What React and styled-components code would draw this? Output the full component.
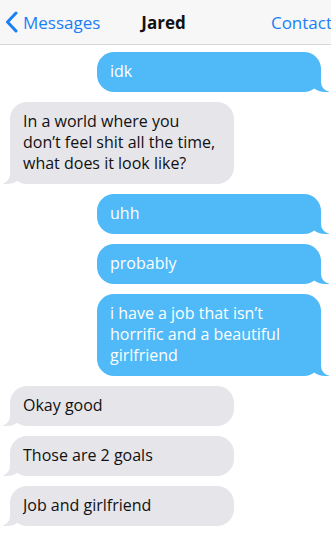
import React from "react";
import styled, { createGlobalStyle } from "styled-components";

const Global = createGlobalStyle`
  html, body { margin: 0; padding: 0; background: #ffffff; }
  body { font-family: "Open Sans", "Noto Sans", sans-serif; -webkit-font-smoothing: antialiased; }
  * { box-sizing: border-box; }
`;

const Screen = styled.div`
  width: 331px;
  height: 534px;
  overflow: hidden;
  background: #ffffff;
  display: flex;
  flex-direction: column;
`;

const NavBar = styled.header`
  height: 45px;
  flex: 0 0 45px;
  display: grid;
  grid-template-columns: 1fr auto 1fr;
  align-items: center;
  background: #f7f7f7;
  border-bottom: 1px solid #d6d6d6;
  font-size: 17px;
`;

const BackLink = styled.div`
  display: flex;
  align-items: center;
  gap: 5px;
  padding-left: 5px;
  color: #1a7ff5;
  justify-self: start;
`;

const Title = styled.div`
  font-weight: 700;
  color: #111;
  padding-right: 4px;
`;

const NavAction = styled.div`
  justify-self: end;
  color: #1a7ff5;
  white-space: nowrap;
  margin-right: -1px;
`;

const Thread = styled.div`
  display: flex;
  flex-direction: column;
  gap: 10px;
  padding: 7px 10px 0 10px;
`;

const Bubble = styled.div`
  position: relative;
  width: 224px;
  padding: 9px 13px 10px 13px;
  border-radius: 17px;
  font-size: 16px;
  line-height: 21px;
  font-weight: ${(p) => (p.$sent ? 500 : 400)};
  align-self: ${(p) => (p.$sent ? "flex-end" : "flex-start")};
  background: ${(p) => (p.$sent ? "#4fbaf7" : "#e6e5ea")};
  color: ${(p) => (p.$sent ? "#ffffff" : "#111111")};

  &::before {
    content: "";
    position: absolute;
    bottom: 0;
    height: 20px;
    width: 20px;
    background: ${(p) => (p.$sent ? "#4fbaf7" : "#e6e5ea")};
    ${(p) =>
      p.$sent
        ? "right: -8px; border-bottom-left-radius: 16px 14px;"
        : "left: -7px; border-bottom-right-radius: 16px 14px;"}
  }

  &::after {
    content: "";
    position: absolute;
    bottom: 0;
    height: 20px;
    width: 10px;
    background: #ffffff;
    ${(p) =>
      p.$sent
        ? "right: -10px; border-bottom-left-radius: 10px;"
        : "left: -10px; border-bottom-right-radius: 10px;"}
  }
`;

const Chevron = () => (
  <svg width="13" height="22" viewBox="0 0 13 22" aria-hidden="true">
    <polyline
      points="11,2 2.5,11 11,20"
      fill="none"
      stroke="#1a7ff5"
      strokeWidth="3"
      strokeLinecap="round"
      strokeLinejoin="round"
    />
  </svg>
);

const messages = [
  { sent: true, text: "idk" },
  { sent: false, text: "In a world where you don\u2019t feel shit all the time, what does it look like?" },
  { sent: true, text: "uhh" },
  { sent: true, text: "probably" },
  { sent: true, text: "i have a job that isn\u2019t horrific and a beautiful girlfriend" },
  { sent: false, text: "Okay good" },
  { sent: false, text: "Those are 2 goals" },
  { sent: false, text: "Job and girlfriend" },
];

export default function App() {
  return (
    <>
      <Global />
      <Screen>
        <NavBar>
          <BackLink>
            <Chevron />
            Messages
          </BackLink>
          <Title>Jared</Title>
          <NavAction>Contact</NavAction>
        </NavBar>
        <Thread>
          {messages.map((m, i) => (
            <Bubble key={i} $sent={m.sent}>
              {m.text}
            </Bubble>
          ))}
        </Thread>
      </Screen>
    </>
  );
}
